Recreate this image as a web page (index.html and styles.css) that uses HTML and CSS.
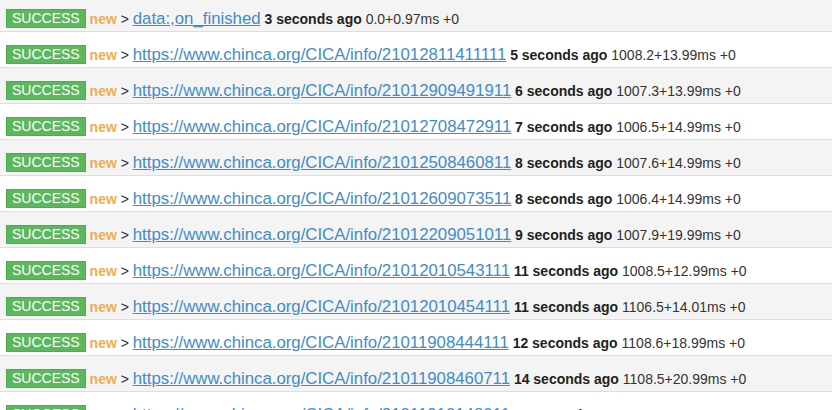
FILE: index.html
```html
<!DOCTYPE html>
<html lang="en">
<head>
  <meta charset="utf-8">
  <title>Crawl log</title>
  <link rel="stylesheet" href="styles.css">
</head>
<body>
  <div class="log">
    <div class="row">
      <span class="label">SUCCESS</span> <span class="new">new</span> &gt; <a href="#">data:,on_finished</a> <b class="ago">3 seconds ago</b> <span class="stat">0.0+0.97ms +0</span>
    </div>
    <div class="row">
      <span class="label">SUCCESS</span> <span class="new">new</span> &gt; <a href="#">https://www.chinca.org/CICA/info/21012811411111</a> <b class="ago">5 seconds ago</b> <span class="stat">1008.2+13.99ms +0</span>
    </div>
    <div class="row">
      <span class="label">SUCCESS</span> <span class="new">new</span> &gt; <a href="#">https://www.chinca.org/CICA/info/21012909491911</a> <b class="ago">6 seconds ago</b> <span class="stat">1007.3+13.99ms +0</span>
    </div>
    <div class="row">
      <span class="label">SUCCESS</span> <span class="new">new</span> &gt; <a href="#">https://www.chinca.org/CICA/info/21012708472911</a> <b class="ago">7 seconds ago</b> <span class="stat">1006.5+14.99ms +0</span>
    </div>
    <div class="row">
      <span class="label">SUCCESS</span> <span class="new">new</span> &gt; <a href="#">https://www.chinca.org/CICA/info/21012508460811</a> <b class="ago">8 seconds ago</b> <span class="stat">1007.6+14.99ms +0</span>
    </div>
    <div class="row">
      <span class="label">SUCCESS</span> <span class="new">new</span> &gt; <a href="#">https://www.chinca.org/CICA/info/21012609073511</a> <b class="ago">8 seconds ago</b> <span class="stat">1006.4+14.99ms +0</span>
    </div>
    <div class="row">
      <span class="label">SUCCESS</span> <span class="new">new</span> &gt; <a href="#">https://www.chinca.org/CICA/info/21012209051011</a> <b class="ago">9 seconds ago</b> <span class="stat">1007.9+19.99ms +0</span>
    </div>
    <div class="row">
      <span class="label">SUCCESS</span> <span class="new">new</span> &gt; <a href="#">https://www.chinca.org/CICA/info/21012010543111</a> <b class="ago">11 seconds ago</b> <span class="stat">1008.5+12.99ms +0</span>
    </div>
    <div class="row">
      <span class="label">SUCCESS</span> <span class="new">new</span> &gt; <a href="#">https://www.chinca.org/CICA/info/21012010454111</a> <b class="ago">11 seconds ago</b> <span class="stat">1106.5+14.01ms +0</span>
    </div>
    <div class="row">
      <span class="label">SUCCESS</span> <span class="new">new</span> &gt; <a href="#">https://www.chinca.org/CICA/info/21011908444111</a> <b class="ago">12 seconds ago</b> <span class="stat">1108.6+18.99ms +0</span>
    </div>
    <div class="row">
      <span class="label">SUCCESS</span> <span class="new">new</span> &gt; <a href="#">https://www.chinca.org/CICA/info/21011908460711</a> <b class="ago">14 seconds ago</b> <span class="stat">1108.5+20.99ms +0</span>
    </div>
    <div class="row">
      <span class="label">SUCCESS</span> <span class="new">new</span> &gt; <a href="#">https://www.chinca.org/CICA/info/21011910148011</a> <b class="ago">15 seconds ago</b> <span class="stat">1109.1+13.99ms +0</span>
    </div>
  </div>
</body>
</html>
```

FILE: styles.css
```css
* {
  margin: 0;
  padding: 0;
  box-sizing: border-box;
}

body {
  font-family: "Liberation Sans", Arial, sans-serif;
  font-size: 14px;
  color: #333333;
  background-color: #ffffff;
  overflow: hidden;
}

.log {
  margin-top: -4px;
}

.row {
  height: 36px;
  padding: 13px 6px 0;
  line-height: 19px;
  white-space: nowrap;
  border-bottom: 1px solid #dddddd;
}

.row:nth-child(odd) {
  background-color: #f4f4f4;
}

.label {
  display: inline-block;
  height: 19px;
  padding: 0 5px;
  line-height: 17px;
  border: 1px solid #4cae4c;
  background-color: #5cb85c;
  color: #ffffff;
  font-size: 14px;
  vertical-align: top;
}

.new {
  font-weight: bold;
  color: #f0ad4e;
}

a {
  font-size: 16.8px;
  color: #428bca;
  text-decoration: underline;
}

.ago {
  font-weight: bold;
  color: #222222;
}

.stat {
  font-size: 14px;
}
```
